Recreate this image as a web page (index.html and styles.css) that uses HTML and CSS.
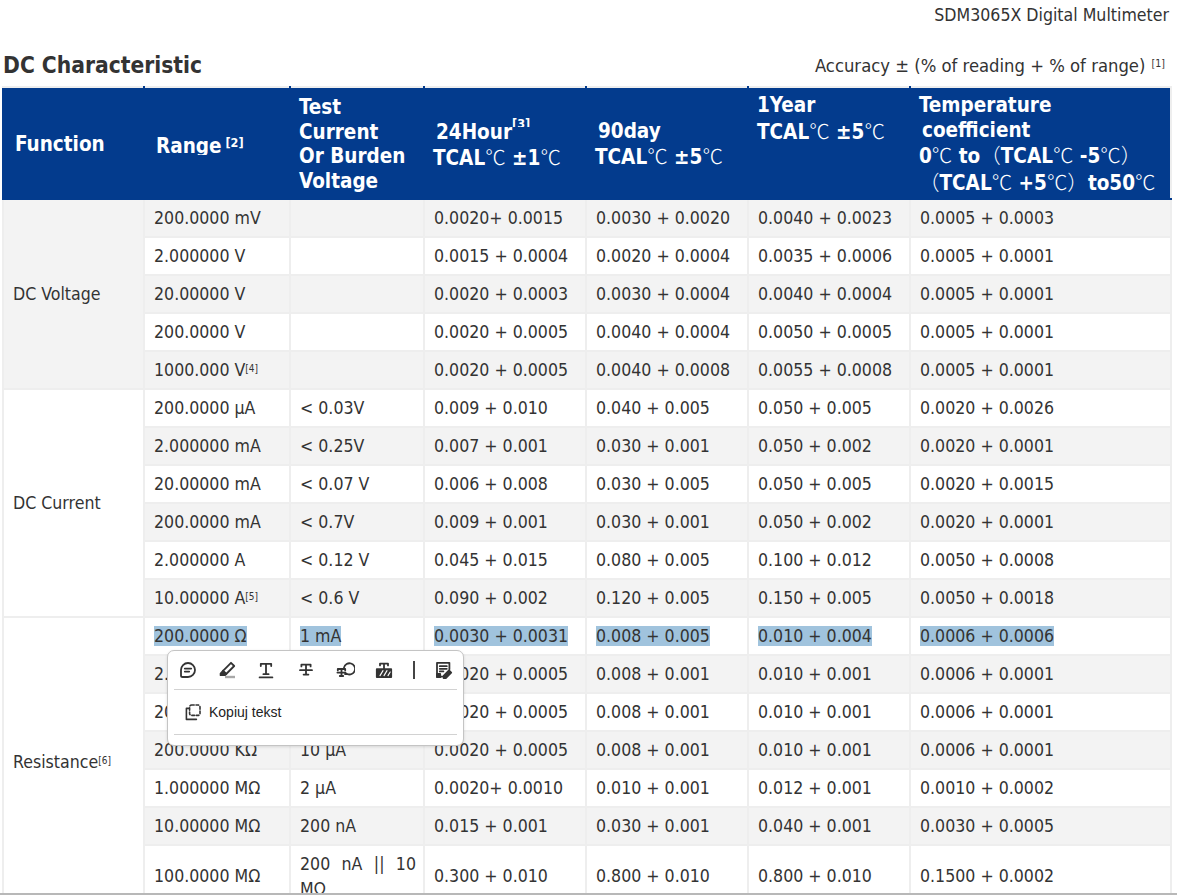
FILE: index.html
```html
<!DOCTYPE html>
<html lang="en">
<head>
<meta charset="utf-8">
<title>SDM3065X DC Characteristic</title>
<link rel="stylesheet" href="styles.css">
</head>
<body>
<div class="page">
  <div class="doc-title">SDM3065X Digital Multimeter</div>
  <div class="section-head">
    <h2 class="section-title">DC Characteristic</h2>
    <div class="accuracy">Accuracy ± (% of reading + % of range) <sup>[1]</sup></div>
  </div>
  <table class="spec">
    <colgroup>
      <col class="c-func"><col class="c-range"><col class="c-test"><col class="c-acc"><col class="c-acc"><col class="c-acc"><col>
    </colgroup>
    <thead>
      <tr>
        <th>Function</th>
        <th class="range"><span class="clip">Range</span><sup> [2]</sup></th>
        <th>Test<br>Current<br>Or Burden<br>Voltage</th>
        <th><span class="ind">24Hour</span><sup class="cut">[3]</sup><br>TCAL<span class="c">℃</span> ±1<span class="c">℃</span></th>
        <th><span class="ind">90day</span><br>TCAL<span class="c">℃</span> ±5<span class="c">℃</span></th>
        <th class="top">1Year<br>TCAL<span class="c">℃</span> ±5<span class="c">℃</span></th>
        <th>Temperature<br><span class="ind">coefficient</span><br>0<span class="c">℃</span> to<span class="c">（</span>TCAL<span class="c">℃</span> -5<span class="c">℃）</span><br><span class="c">（</span>TCAL<span class="c">℃</span> +5<span class="c">℃）</span>to50<span class="c">℃</span></th>
      </tr>
    </thead>
    <tbody>
      <tr><td rowspan="5" class="func">DC Voltage</td><td>200.0000 mV</td><td></td><td>0.0020+ 0.0015</td><td>0.0030 + 0.0020</td><td>0.0040 + 0.0023</td><td>0.0005 + 0.0003</td></tr>
      <tr><td>2.000000 V</td><td></td><td>0.0015 + 0.0004</td><td>0.0020 + 0.0004</td><td>0.0035 + 0.0006</td><td>0.0005 + 0.0001</td></tr>
      <tr><td>20.00000 V</td><td></td><td>0.0020 + 0.0003</td><td>0.0030 + 0.0004</td><td>0.0040 + 0.0004</td><td>0.0005 + 0.0001</td></tr>
      <tr><td>200.0000 V</td><td></td><td>0.0020 + 0.0005</td><td>0.0040 + 0.0004</td><td>0.0050 + 0.0005</td><td>0.0005 + 0.0001</td></tr>
      <tr><td>1000.000 V<sup>[4]</sup></td><td></td><td>0.0020 + 0.0005</td><td>0.0040 + 0.0008</td><td>0.0055 + 0.0008</td><td>0.0005 + 0.0001</td></tr>
      <tr><td rowspan="6" class="func">DC Current</td><td>200.0000 µA</td><td>&lt; 0.03V</td><td>0.009 + 0.010</td><td>0.040 + 0.005</td><td>0.050 + 0.005</td><td>0.0020 + 0.0026</td></tr>
      <tr><td>2.000000 mA</td><td>&lt; 0.25V</td><td>0.007 + 0.001</td><td>0.030 + 0.001</td><td>0.050 + 0.002</td><td>0.0020 + 0.0001</td></tr>
      <tr><td>20.00000 mA</td><td>&lt; 0.07 V</td><td>0.006 + 0.008</td><td>0.030 + 0.005</td><td>0.050 + 0.005</td><td>0.0020 + 0.0015</td></tr>
      <tr><td>200.0000 mA</td><td>&lt; 0.7V</td><td>0.009 + 0.001</td><td>0.030 + 0.001</td><td>0.050 + 0.002</td><td>0.0020 + 0.0001</td></tr>
      <tr><td>2.000000 A</td><td>&lt; 0.12 V</td><td>0.045 + 0.015</td><td>0.080 + 0.005</td><td>0.100 + 0.012</td><td>0.0050 + 0.0008</td></tr>
      <tr><td>10.00000 A<sup>[5]</sup></td><td>&lt; 0.6 V</td><td>0.090 + 0.002</td><td>0.120 + 0.005</td><td>0.150 + 0.005</td><td>0.0050 + 0.0018</td></tr>
      <tr><td rowspan="7" class="func">Resistance<sup>[6]</sup></td><td><span class="sel">200.0000 Ω</span></td><td><span class="sel">1 mA</span></td><td><span class="sel">0.0030 + 0.0031</span></td><td><span class="sel">0.008 + 0.005</span></td><td><span class="sel">0.010 + 0.004</span></td><td><span class="sel">0.0006 + 0.0006</span></td></tr>
      <tr><td>2.000000 KΩ</td><td>1 mA</td><td>0.0020 + 0.0005</td><td>0.008 + 0.001</td><td>0.010 + 0.001</td><td>0.0006 + 0.0001</td></tr>
      <tr><td>20.00000 KΩ</td><td>100 µA</td><td>0.0020 + 0.0005</td><td>0.008 + 0.001</td><td>0.010 + 0.001</td><td>0.0006 + 0.0001</td></tr>
      <tr><td>200.0000 KΩ</td><td>10 µA</td><td>0.0020 + 0.0005</td><td>0.008 + 0.001</td><td>0.010 + 0.001</td><td>0.0006 + 0.0001</td></tr>
      <tr><td>1.000000 MΩ</td><td>2 µA</td><td>0.0020+ 0.0010</td><td>0.010 + 0.001</td><td>0.012 + 0.001</td><td>0.0010 + 0.0002</td></tr>
      <tr><td>10.00000 MΩ</td><td>200 nA</td><td>0.015 + 0.001</td><td>0.030 + 0.001</td><td>0.040 + 0.001</td><td>0.0030 + 0.0005</td></tr>
      <tr><td>100.0000 MΩ</td><td class="just">200 nA || 10 MΩ</td><td>0.300 + 0.010</td><td>0.800 + 0.010</td><td>0.800 + 0.010</td><td>0.1500 + 0.0002</td></tr>
    </tbody>
  </table>

  <div class="popup">
    <div class="tools">
      <span class="tool"><svg viewBox="0 0 20 20"><path d="M10 3a7 7 0 0 1 0 14H4.6A1.6 1.6 0 0 1 3 15.4V10A7 7 0 0 1 10 3z"/><path d="M6.8 8.6h6.4M6.8 11.6h4.4"/></svg></span>
      <span class="tool"><svg viewBox="0 0 20 20"><path class="soft" d="M8 17h10"/><path d="M14 2.8l3.2 3.2-8 8-3.2-3.2z"/><path class="fill" d="M6 10.8l3.2 3.2-1.2 1.2H3.6v-1.6z"/></svg></span>
      <span class="tool"><svg viewBox="0 0 20 20"><path d="M4.8 6V3.8h10.4V6M10 3.8v10.4M7.4 14.2h5.2M3.6 17.4h12.8"/></svg></span>
      <span class="tool"><svg viewBox="0 0 20 20"><path d="M5.4 6.4V4.6h9.2v1.8M10 4.6v10M7.6 14.6h4.8M4 10.2h12"/></svg></span>
      <span class="tool"><svg viewBox="0 0 20 20"><path d="M9 7.6A5.6 5.6 0 1 1 12.2 14H10"/><path d="M2.8 10.4v-1.4h7.4v1.4M6.5 9v7M4.8 16h3.4M2.4 12.6h8.2"/></svg></span>
      <span class="tool"><svg viewBox="0 0 20 20"><path d="M6 5.4V3.6h8v1.8M10 3.6v4.8"/><rect class="fill" x="2.8" y="9.2" width="14.4" height="7.8"/><path class="hatch" d="M6 15.6l3-5M10 15.6l3-5M14 15.6l2.2-3.6"/></svg></span>
      <span class="sep"></span>
      <span class="tool"><svg viewBox="0 0 20 20"><path d="M9.2 16.6H4V2.8h12.4v6.4"/><path d="M6.8 6.2h7M6.8 8.8h7M6.8 11.4h3.6"/><rect x="4" y="14" width="3.2" height="3.2" class="fill"/><path class="fill" d="M16 10.4l2.2 2.2-5.4 5.4h-2.2v-2.2z"/></svg></span>
    </div>
    <div class="divider"></div>
    <div class="copy">
      <svg viewBox="0 0 20 20"><rect class="dash" x="6.6" y="3" width="10.4" height="10.4" rx="2"/><path d="M5.6 6.4H3.4V17.4H13.4"/></svg>
      <span>Kopiuj tekst</span>
    </div>
    <div class="divider"></div>
  </div>
</div>
<div class="viewer-edge"></div>
</body>
</html>
```
FILE: styles.css
```css
html, body {
  margin: 0;
  padding: 0;
  background: #ffffff;
}

body {
  font-family: "DejaVu Sans", Verdana, sans-serif;
  font-stretch: condensed;
  color: #333333;
  overflow: hidden;
}

.page {
  position: relative;
  padding: 0 5px 0 2px;
}

.doc-title {
  text-align: right;
  font-size: 17.6px;
  line-height: 22px;
  padding: 4px 3px 0 0;
  color: #333;
}

.section-head {
  display: flex;
  justify-content: space-between;
  align-items: flex-end;
  margin-top: 26px;
  padding: 0 0 7px 1px;
}

.section-title {
  margin: 0;
  font-size: 22.6px;
  line-height: 27px;
  font-weight: bold;
  color: #333;
}

.accuracy {
  font-size: 18.3px;
  line-height: 22px;
  padding-right: 7px;
  padding-bottom: 2px;
}

.accuracy sup {
  margin-left: 1px;
}

sup {
  font-size: 10.5px;
  vertical-align: top;
  position: relative;
  top: -3px;
}

.spec {
  width: 100%;
  border-collapse: collapse;
  table-layout: fixed;
}

.c-func { width: 141px; }
.c-range { width: 146px; }
.c-test { width: 134px; }
.c-acc { width: 162px; }

.spec th {
  background: #033b8d;
  color: #ffffff;
  font-size: 20.5px;
  font-weight: bold;
  line-height: 24.5px;
  text-align: left;
  vertical-align: middle;
  padding: 5px 6px 3px 8px;
  border: 2px solid #033b8d;
  border-top-color: #eeeeee;
}

.spec th:first-child {
  padding-left: 11px;
}

.spec th.range {
  padding-left: 11px;
}

.spec th:last-child {
  border-right-color: #eeeeee;
}

.spec th.top {
  vertical-align: top;
}

.spec th sup {
  font-size: 12.5px;
  top: -1px;
}

.spec th sup.cut {
  display: inline-block;
  height: 9px;
  overflow: hidden;
  top: 0;
  line-height: 12px;
  vertical-align: 12px;
}

.ind {
  padding-left: 3px;
}

.clip {
  display: inline-block;
  height: 21px;
  overflow: hidden;
  vertical-align: -4px;
}

.c {
  font-family: "Noto Sans CJK SC", sans-serif;
  font-weight: 300;
  font-stretch: normal;
}

.spec td {
  font-size: 17.6px;
  line-height: 25px;
  padding: 5.5px 7px 5.5px 9px;
  border: 2px solid #eeeeee;
  vertical-align: middle;
  color: #333333;
}

.spec tbody tr:nth-child(odd) td {
  background: #f3f3f3;
}

.spec td.func {
  padding-left: 9px;
}

.spec td sup {
  font-size: 10px;
  top: -2px;
}

.spec td.just {
  text-align: justify;
}

.sel {
  background: #a0c3dd;
}

.popup {
  position: absolute;
  left: 167px;
  top: 650px;
  width: 295px;
  height: 94px;
  background: #ffffff;
  border: 1px solid #c4c4c4;
  border-radius: 7px;
  box-shadow: 0 1px 3px rgba(0, 0, 0, 0.12);
  font-family: "Liberation Sans", Arial, sans-serif;
  font-stretch: normal;
}

.tools {
  display: flex;
  align-items: center;
  height: 38px;
}

.tool {
  width: 40px;
  display: flex;
  justify-content: center;
}

.tool svg, .copy svg {
  width: 20px;
  height: 20px;
  fill: none;
  stroke: #333333;
  stroke-width: 1.8;
  stroke-linecap: round;
  stroke-linejoin: round;
}

.tool svg .fill, .copy svg .fill {
  fill: #333333;
}

.tool svg .soft {
  stroke: #a8a8a8;
  stroke-width: 2.4;
  stroke-linecap: butt;
}

.tool svg .hatch {
  stroke: #ffffff;
  stroke-width: 1.1;
}

.sep {
  width: 1.5px;
  height: 18px;
  background: #444;
  margin: 0 9px 0 9px;
}

.divider {
  height: 1px;
  margin: 0 6px;
  background: #d2d2d2;
}

.copy {
  display: flex;
  align-items: center;
  gap: 6px;
  height: 44px;
  padding-left: 15px;
  font-size: 14px;
  color: #222;
}

.copy svg {
  stroke-width: 1.6;
}

.copy svg .dash {
  stroke-dasharray: 2.6 1.8;
}

.viewer-edge {
  position: fixed;
  left: 0;
  right: 0;
  bottom: 0;
  height: 2px;
  background: #b8b8b8;
}
```
